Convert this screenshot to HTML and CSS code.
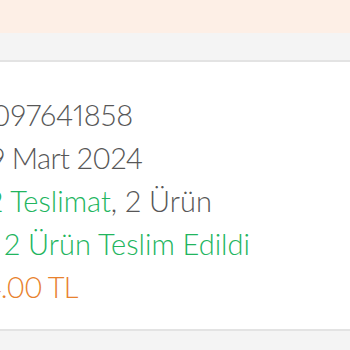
FILE: index.html
```html
<!DOCTYPE html>
<html lang="tr">
<head>
<meta charset="utf-8">
<link rel="stylesheet" href="styles.css">
</head>
<body>
<div class="page">
  <div class="notice"></div>
  <div class="spacer"></div>
  <div class="card">
    <div class="line l1">3097641858</div>
    <div class="line l2">29 Mart 2024</div>
    <div class="line l3"><span class="green">2 Teslimat</span>, 2 Ürün</div>
    <div class="line l4 green">2 Ürün Teslim Edildi</div>
    <div class="line l5 orange">1.234.00 TL</div>
  </div>
  <div class="footer"></div>
</div>
</body>
</html>
```

FILE: styles.css
```css
html, body {
  margin: 0;
  padding: 0;
  background: #f4f4f4;
}
.page {
  width: 350px;
  height: 350px;
  overflow: hidden;
  display: flex;
  flex-direction: column;
  font-family: Lato, "Noto Sans", sans-serif;
}
.notice {
  height: 33px;
  background: #fdefe6;
  flex: none;
}
.spacer {
  height: 27px;
  background: #f4f4f4;
  border-bottom: 2px solid #e3e3e3;
  flex: none;
}
.card {
  background: #ffffff;
  height: 269px;
  flex: none;
  box-sizing: border-box;
  padding-top: 31px;
  border-bottom: 2px solid #e3e3e3;
  overflow: hidden;
}
.footer {
  flex: 1;
  background: #f4f4f4;
}
.line {
  font-size: 29px;
  font-weight: 300;
  line-height: 43px;
  color: #575757;
  white-space: nowrap;
  font-variant-numeric: proportional-nums;
}
.l1 { margin-left: -25px; }
.l2 { margin-left: -26px; letter-spacing: -0.6px; }
.l3 { margin-left: -13px; }
.l4 { margin-left: 4px; }
.l5 { margin-left: -62px; letter-spacing: -1px; }
.green { color: #22b55e; }
.orange { color: #e8822e; }
```
